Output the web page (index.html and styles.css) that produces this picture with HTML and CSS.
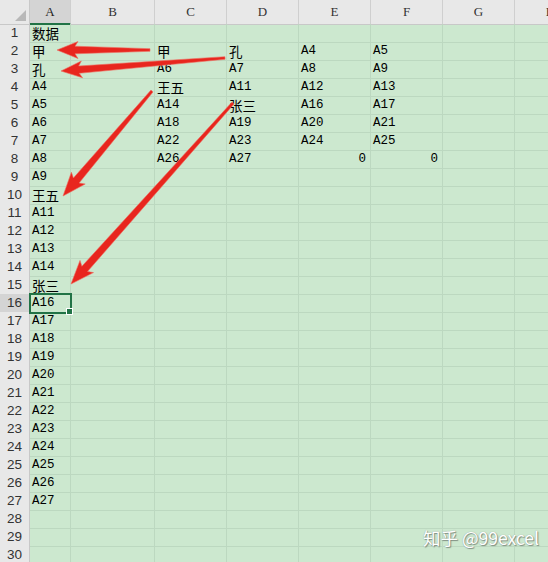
FILE: index.html
```html
<!DOCTYPE html>
<html>
<head>
<meta charset="utf-8">
<link rel="stylesheet" href="styles.css">
</head>
<body>
<div class="sheet">
  <div class="row head">
    <div class="corner"><span class="tri"></span></div>
    <div class="ch sel">A</div><div class="ch">B</div><div class="ch">C</div><div class="ch">D</div><div class="ch">E</div><div class="ch">F</div><div class="ch">G</div><div class="ch">H</div>
  </div>
  <div class="row"><div class="rh">1</div><div class="c cjk">数据</div><div class="c"></div><div class="c"></div><div class="c"></div><div class="c"></div><div class="c"></div><div class="c"></div><div class="c"></div></div>
  <div class="row"><div class="rh">2</div><div class="c cjk">甲</div><div class="c"></div><div class="c cjk">甲</div><div class="c cjk">孔</div><div class="c">A4</div><div class="c">A5</div><div class="c"></div><div class="c"></div></div>
  <div class="row"><div class="rh">3</div><div class="c cjk">孔</div><div class="c"></div><div class="c">A6</div><div class="c">A7</div><div class="c">A8</div><div class="c">A9</div><div class="c"></div><div class="c"></div></div>
  <div class="row"><div class="rh">4</div><div class="c">A4</div><div class="c"></div><div class="c cjk">王五</div><div class="c">A11</div><div class="c">A12</div><div class="c">A13</div><div class="c"></div><div class="c"></div></div>
  <div class="row"><div class="rh">5</div><div class="c">A5</div><div class="c"></div><div class="c">A14</div><div class="c cjk">张三</div><div class="c">A16</div><div class="c">A17</div><div class="c"></div><div class="c"></div></div>
  <div class="row"><div class="rh">6</div><div class="c">A6</div><div class="c"></div><div class="c">A18</div><div class="c">A19</div><div class="c">A20</div><div class="c">A21</div><div class="c"></div><div class="c"></div></div>
  <div class="row"><div class="rh">7</div><div class="c">A7</div><div class="c"></div><div class="c">A22</div><div class="c">A23</div><div class="c">A24</div><div class="c">A25</div><div class="c"></div><div class="c"></div></div>
  <div class="row"><div class="rh">8</div><div class="c">A8</div><div class="c"></div><div class="c">A26</div><div class="c">A27</div><div class="c num">0</div><div class="c num">0</div><div class="c"></div><div class="c"></div></div>
  <div class="row"><div class="rh">9</div><div class="c">A9</div><div class="c"></div><div class="c"></div><div class="c"></div><div class="c"></div><div class="c"></div><div class="c"></div><div class="c"></div></div>
  <div class="row"><div class="rh">10</div><div class="c cjk">王五</div><div class="c"></div><div class="c"></div><div class="c"></div><div class="c"></div><div class="c"></div><div class="c"></div><div class="c"></div></div>
  <div class="row"><div class="rh">11</div><div class="c">A11</div><div class="c"></div><div class="c"></div><div class="c"></div><div class="c"></div><div class="c"></div><div class="c"></div><div class="c"></div></div>
  <div class="row"><div class="rh">12</div><div class="c">A12</div><div class="c"></div><div class="c"></div><div class="c"></div><div class="c"></div><div class="c"></div><div class="c"></div><div class="c"></div></div>
  <div class="row"><div class="rh">13</div><div class="c">A13</div><div class="c"></div><div class="c"></div><div class="c"></div><div class="c"></div><div class="c"></div><div class="c"></div><div class="c"></div></div>
  <div class="row"><div class="rh">14</div><div class="c">A14</div><div class="c"></div><div class="c"></div><div class="c"></div><div class="c"></div><div class="c"></div><div class="c"></div><div class="c"></div></div>
  <div class="row"><div class="rh">15</div><div class="c cjk">张三</div><div class="c"></div><div class="c"></div><div class="c"></div><div class="c"></div><div class="c"></div><div class="c"></div><div class="c"></div></div>
  <div class="row"><div class="rh rsel">16</div><div class="c active">A16<span class="handle"></span></div><div class="c"></div><div class="c"></div><div class="c"></div><div class="c"></div><div class="c"></div><div class="c"></div><div class="c"></div></div>
  <div class="row"><div class="rh">17</div><div class="c">A17</div><div class="c"></div><div class="c"></div><div class="c"></div><div class="c"></div><div class="c"></div><div class="c"></div><div class="c"></div></div>
  <div class="row"><div class="rh">18</div><div class="c">A18</div><div class="c"></div><div class="c"></div><div class="c"></div><div class="c"></div><div class="c"></div><div class="c"></div><div class="c"></div></div>
  <div class="row"><div class="rh">19</div><div class="c">A19</div><div class="c"></div><div class="c"></div><div class="c"></div><div class="c"></div><div class="c"></div><div class="c"></div><div class="c"></div></div>
  <div class="row"><div class="rh">20</div><div class="c">A20</div><div class="c"></div><div class="c"></div><div class="c"></div><div class="c"></div><div class="c"></div><div class="c"></div><div class="c"></div></div>
  <div class="row"><div class="rh">21</div><div class="c">A21</div><div class="c"></div><div class="c"></div><div class="c"></div><div class="c"></div><div class="c"></div><div class="c"></div><div class="c"></div></div>
  <div class="row"><div class="rh">22</div><div class="c">A22</div><div class="c"></div><div class="c"></div><div class="c"></div><div class="c"></div><div class="c"></div><div class="c"></div><div class="c"></div></div>
  <div class="row"><div class="rh">23</div><div class="c">A23</div><div class="c"></div><div class="c"></div><div class="c"></div><div class="c"></div><div class="c"></div><div class="c"></div><div class="c"></div></div>
  <div class="row"><div class="rh">24</div><div class="c">A24</div><div class="c"></div><div class="c"></div><div class="c"></div><div class="c"></div><div class="c"></div><div class="c"></div><div class="c"></div></div>
  <div class="row"><div class="rh">25</div><div class="c">A25</div><div class="c"></div><div class="c"></div><div class="c"></div><div class="c"></div><div class="c"></div><div class="c"></div><div class="c"></div></div>
  <div class="row"><div class="rh">26</div><div class="c">A26</div><div class="c"></div><div class="c"></div><div class="c"></div><div class="c"></div><div class="c"></div><div class="c"></div><div class="c"></div></div>
  <div class="row"><div class="rh">27</div><div class="c">A27</div><div class="c"></div><div class="c"></div><div class="c"></div><div class="c"></div><div class="c"></div><div class="c"></div><div class="c"></div></div>
  <div class="row"><div class="rh">28</div><div class="c"></div><div class="c"></div><div class="c"></div><div class="c"></div><div class="c"></div><div class="c"></div><div class="c"></div><div class="c"></div></div>
  <div class="row"><div class="rh">29</div><div class="c"></div><div class="c"></div><div class="c"></div><div class="c"></div><div class="c"></div><div class="c"></div><div class="c"></div><div class="c"></div></div>
  <div class="row"><div class="rh">30</div><div class="c"></div><div class="c"></div><div class="c"></div><div class="c"></div><div class="c"></div><div class="c"></div><div class="c"></div><div class="c"></div></div>

  <svg class="arrows" width="548" height="562" viewBox="0 0 548 562">
    <g fill="#e8261e" stroke="#f06a5e" stroke-width="0.6" stroke-linejoin="round">
      <polygon points="150,51.3 75,53.8 78,58.5 57,50 78,41.5 75,46.2 150,48.7"/>
      <polygon points="225.1,59.3 79.2,73.3 82.6,77.8 61,71 81.3,61 78.7,66 224.9,56.7"/>
      <polygon points="153,91.9 79.1,183 85.2,184 63,196 71.4,172.2 73.4,178 151,90.1"/>
      <polygon points="234,103.9 87.5,271.5 93.5,272.6 71,284 80,260.4 81.9,266.3 232,102.1"/>
    </g>
  </svg>
  <div class="watermark">知乎 @99excel</div>
</div>
</body>
</html>
```

FILE: styles.css
```css
html, body {
  margin: 0;
  padding: 0;
  width: 548px;
  height: 562px;
  overflow: hidden;
  background: #cce8cf;
}

.sheet {
  position: relative;
  width: 548px;
  height: 562px;
  overflow: hidden;
  font-family: "Liberation Mono", "Noto Sans CJK SC", monospace;
  font-size: 12.5px;
  color: #000;
}

.row {
  display: grid;
  grid-template-columns: 30px 41px 84px 72px 72px 72px 72px 72px 72px;
  height: 18px;
  width: 587px;
}

.row.head {
  height: 24px;
  background: #e8e8e8;
}

.corner {
  position: relative;
  box-sizing: border-box;
  border-right: 1px solid #c8c8c8;
  border-bottom: 1px solid #c8c8c8;
  background: #e8e8e8;
}

.tri {
  position: absolute;
  right: 3px;
  bottom: 3px;
  width: 0;
  height: 0;
  border-left: 11px solid transparent;
  border-bottom: 11px solid #b8b8b8;
}

.ch {
  box-sizing: border-box;
  border-right: 1px solid #cfcfcf;
  border-bottom: 1px solid #c8c8c8;
  text-align: center;
  line-height: 23px;
  font-family: "Liberation Serif", "Noto Sans CJK SC", serif;
  font-size: 13px;
  color: #333;
}

.ch.sel {
  background: #d4d4d4;
  border-bottom: 2px solid #217346;
  color: #222;
}

.rh {
  box-sizing: border-box;
  background: #e8e8e8;
  border-right: 1px solid #c8c8c8;
  border-bottom: 1px solid #d4d4d4;
  text-align: center;
  line-height: 18px;
  font-family: "Liberation Sans", sans-serif;
  font-size: 13.5px;
  color: #333;
}

.rh.rsel {
  background: #d4d4d4;
}

.c {
  box-sizing: border-box;
  border-right: 1px solid #bcd8c0;
  border-bottom: 1px solid #bcd8c0;
  padding-left: 2px;
  padding-top: 1px;
  line-height: 17px;
  white-space: nowrap;
  position: relative;
}

.c.cjk {
  font-family: "Noto Sans CJK SC", sans-serif;
  font-size: 13.5px;
  line-height: 16px;
}

.c.num {
  text-align: right;
  padding-right: 4px;
}

.c.active {
  outline: 2px solid #217346;
  outline-offset: -1px;
  z-index: 2;
}

.handle {
  position: absolute;
  right: -3px;
  bottom: -3px;
  width: 5px;
  height: 5px;
  background: #217346;
  border: 1px solid #fff;
  box-sizing: content-box;
}

.arrows {
  position: absolute;
  left: 0;
  top: 0;
  z-index: 5;
  pointer-events: none;
}

.watermark {
  position: absolute;
  left: 423px;
  top: 526px;
  z-index: 6;
  font-family: "Noto Sans CJK SC", "Liberation Sans", sans-serif;
  font-size: 17.5px;
  line-height: 24px;
  color: #ffffff;
  text-shadow: 0 0 1px #8a9a8c, 1px 1px 1px #7d8b7f;
}
```
